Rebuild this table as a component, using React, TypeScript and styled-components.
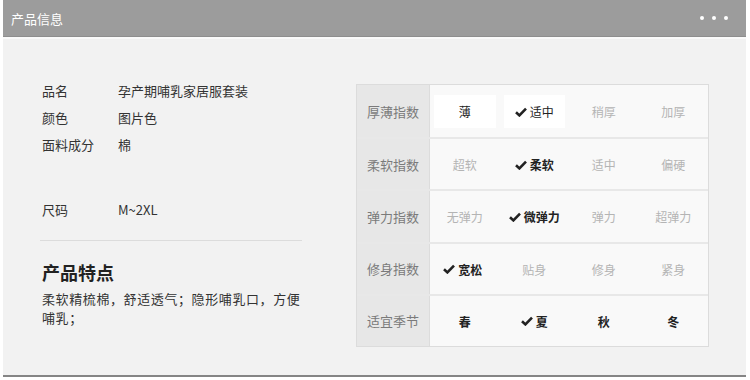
import styled, { createGlobalStyle } from "styled-components";

const Global = createGlobalStyle`
  html, body {
    margin: 0;
    padding: 0;
    background: #ffffff;
  }
  body {
    font-family: "Noto Sans CJK SC", "Noto Sans", sans-serif;
  }
`;

const Page = styled.div`
  width: 743px;
  height: 377px;
  margin-left: 3px;
  display: flex;
  flex-direction: column;
  border-bottom: 2px solid #858585;
  box-sizing: border-box;
  background: #f2f2f2;
`;

const Header = styled.div`
  height: 36px;
  background: #9c9c9c;
  border-bottom: 1px solid #8e8e8e;
  display: flex;
  align-items: center;
  justify-content: space-between;
  padding: 0 18px 0 8px;
  color: #ffffff;
  font-size: 13px;
  flex-shrink: 0;
`;

const Dots = styled.div`
  display: flex;
  gap: 8px;
  span {
    width: 4px;
    height: 4px;
    border-radius: 50%;
    background: #ffffff;
  }
`;

const Body = styled.div`
  flex: 1;
  border-top: 2px solid #fafafa;
  display: flex;
  padding: 0 0 0 37px;
`;

const Left = styled.div`
  width: 262px;
  padding-top: 42px;
  margin-right: 54px;
`;

const InfoRow = styled.div<{ $gap?: number }>`
  display: flex;
  font-size: 13px;
  line-height: 19px;
  color: #333333;
  margin-top: ${(p) => p.$gap ?? 8}px;
  padding-left: 2px;
  &:first-child {
    margin-top: 0;
  }
`;

const Key = styled.span`
  width: 76px;
`;

const Divider = styled.div`
  height: 1px;
  background: #dcdcdc;
  margin-top: 21px;
`;

const Title = styled.div`
  font-size: 18px;
  font-weight: bold;
  color: #222222;
  margin: 19px 0 0 2px;
  line-height: 24px;
`;

const Desc = styled.div`
  font-size: 13px;
  letter-spacing: 0.6px;
  line-height: 19px;
  color: #333333;
  margin: 5px 0 0 2px;
`;

const Table = styled.div`
  margin-top: 45px;
  width: 353px;
  height: 263px;
  border: 1px solid #dcdcdc;
  box-sizing: border-box;
  display: grid;
  grid-template-rows: repeat(5, 1fr);
  background: #f9f9f9;
`;

const Row = styled.div`
  display: grid;
  grid-template-columns: 73px repeat(4, 1fr);
  border-top: 2px solid #e8e8e8;
  &:first-child {
    border-top: none;
  }
`;

const Label = styled.div`
  background: #e7e7e7;
  border-right: 1px solid #dcdcdc;
  color: #7a7a7a;
  font-size: 13px;
  display: flex;
  align-items: center;
  justify-content: center;
`;

const Cell = styled.div`
  display: flex;
  align-items: center;
  justify-content: center;
  padding: 10px 4px 9px;
`;

const Opt = styled.div<{ $on?: boolean; $strong?: boolean; $box?: boolean; $shift?: number }>`
  display: flex;
  align-items: center;
  justify-content: center;
  gap: 3px;
  height: 100%;
  width: 100%;
  font-size: 12px;
  white-space: nowrap;
  color: ${(p) => (p.$on ? "#222222" : "#b4b4b4")};
  font-weight: ${(p) => (p.$strong ? "bold" : "normal")};
  background: ${(p) => (p.$box ? "#ffffff" : "transparent")};
  transform: translateX(${(p) => p.$shift ?? 0}px);
`;

const Check = () => (
  <svg width="12" height="10" viewBox="0 0 12 10">
    <path d="M1 5.2 L4.4 8.4 L11 1.6" fill="none" stroke="#222" strokeWidth="2.6" />
  </svg>
);

type O = { t: string; on?: boolean; check?: boolean; strong?: boolean; box?: boolean; shift?: number };

const rows: { label: string; opts: O[] }[] = [
  {
    label: "厚薄指数",
    opts: [
      { t: "薄", on: true, box: true },
      { t: "适中", on: true, check: true, box: true },
      { t: "稍厚" },
      { t: "加厚" },
    ],
  },
  {
    label: "柔软指数",
    opts: [
      { t: "超软" },
      { t: "柔软", on: true, check: true, strong: true },
      { t: "适中" },
      { t: "偏硬" },
    ],
  },
  {
    label: "弹力指数",
    opts: [
      { t: "无弹力" },
      { t: "微弹力", on: true, check: true, strong: true },
      { t: "弹力" },
      { t: "超弹力" },
    ],
  },
  {
    label: "修身指数",
    opts: [
      { t: "宽松", on: true, check: true, strong: true, shift: -2 },
      { t: "贴身" },
      { t: "修身" },
      { t: "紧身" },
    ],
  },
  {
    label: "适宜季节",
    opts: [
      { t: "春", on: true, strong: true },
      { t: "夏", on: true, check: true, strong: true },
      { t: "秋", on: true, strong: true },
      { t: "冬", on: true, strong: true },
    ],
  },
];

const App: React.FC = () => {
  return (
    <>
      <Global />
      <Page>
        <Header>
          <span>产品信息</span>
          <Dots>
            <span />
            <span />
            <span />
          </Dots>
        </Header>
        <Body>
          <Left>
            <InfoRow>
              <Key>品名</Key>
              <span>孕产期哺乳家居服套装</span>
            </InfoRow>
            <InfoRow>
              <Key>颜色</Key>
              <span>图片色</span>
            </InfoRow>
            <InfoRow>
              <Key>面料成分</Key>
              <span>棉</span>
            </InfoRow>
            <InfoRow $gap={46}>
              <Key>尺码</Key>
              <span>M~2XL</span>
            </InfoRow>
            <Divider />
            <Title>产品特点</Title>
            <Desc>柔软精梳棉，舒适透气；隐形哺乳口，方便哺乳；</Desc>
          </Left>
          <Table>
            {rows.map((r) => (
              <Row key={r.label}>
                <Label>{r.label}</Label>
                {r.opts.map((o) => (
                  <Cell key={o.t}>
                    <Opt $on={o.on} $strong={o.strong} $box={o.box} $shift={o.shift}>
                      {o.check && <Check />}
                      {o.t}
                    </Opt>
                  </Cell>
                ))}
              </Row>
            ))}
          </Table>
        </Body>
      </Page>
    </>
  );
};

export default App;
